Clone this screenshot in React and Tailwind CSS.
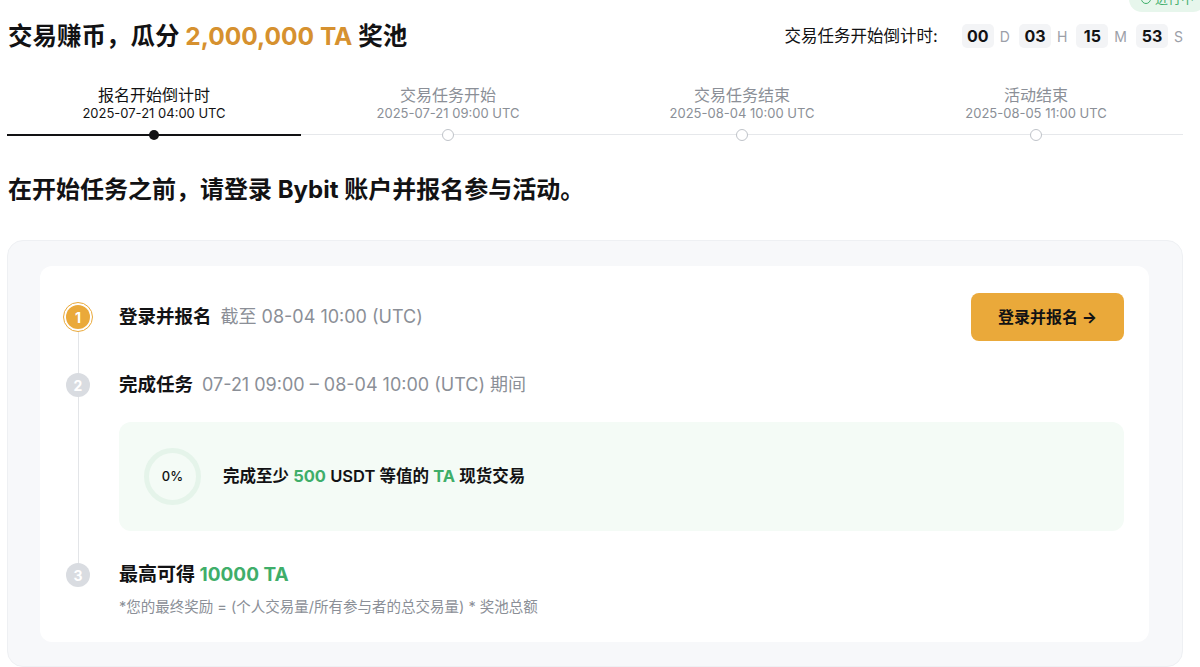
import React from "react";

const font = { fontFamily: "Inter, 'Noto Sans CJK SC', sans-serif" };

const milestones = [
  { title: "报名开始倒计时", date: "2025-07-21 04:00 UTC", active: true },
  { title: "交易任务开始", date: "2025-07-21 09:00 UTC" },
  { title: "交易任务结束", date: "2025-08-04 10:00 UTC" },
  { title: "活动结束", date: "2025-08-05 11:00 UTC" },
];

const countdown = [
  ["00", "D"],
  ["03", "H"],
  ["15", "M"],
  ["53", "S"],
];

function StepDot({ n, active }) {
  if (active) {
    return (
      <div className="w-[30px] h-[30px] rounded-full border border-[#eaa93a] bg-white flex items-center justify-center shrink-0">
        <div className="w-[24px] h-[24px] rounded-full bg-[#eaa93a] text-white text-[14px] font-bold flex items-center justify-center">
          {n}
        </div>
      </div>
    );
  }
  return (
    <div className="w-[30px] h-[30px] flex items-center justify-center shrink-0">
      <div className="w-[24px] h-[24px] rounded-full bg-[#d9dce1] text-white text-[14px] font-bold flex items-center justify-center">
        {n}
      </div>
    </div>
  );
}

export default function App() {
  return (
    <div className="relative bg-white w-[1200px] h-[667px] overflow-hidden text-[#121214]" style={font}>
      {/* status badge, mostly scrolled off the top */}
      <div className="absolute top-[-14px] right-[-6px] rounded-full bg-[#e7f6ec] text-[#3fae6a] text-[13px] px-3 py-[3px] flex items-center gap-1">
        <span className="w-[10px] h-[10px] rounded-full border border-[#3fae6a]" />
        进行中
      </div>

      <div className="pl-[7px] pr-[17px]">
        <div className="flex items-center justify-between h-[72px]">
          <h1 className="text-[24.5px] font-bold pl-[1px]">
            交易赚币，瓜分 <span className="text-[#d6912f]">2,000,000 TA</span> 奖池
          </h1>
          <div className="flex items-center">
            <span className="text-[16.5px] mr-[24px]">交易任务开始倒计时:</span>
            {countdown.map(([v, u], i) => (
              <div key={u} className="flex items-center">
                <div className="w-[32px] h-[24px] rounded-[5px] bg-[#f3f4f6] flex items-center justify-center text-[16px] font-bold">
                  {v}
                </div>
                <span className={`text-[14px] text-[#9ca0a8] ml-[6px] ${i < 3 ? "mr-[9px]" : ""}`}>{u}</span>
              </div>
            ))}
          </div>
        </div>

        {/* timeline */}
        <div className="grid grid-cols-4 mt-[13px]">
          {milestones.map((m) => (
            <div key={m.title} className="flex flex-col items-center">
              <div className={`text-[16px] leading-[20px] ${m.active ? "text-[#121214]" : "text-[#8b8f97]"}`}>{m.title}</div>
              <div className={`text-[13px] leading-[16px] ${m.active ? "text-[#121214]" : "text-[#8b8f97]"}`}>{m.date}</div>
              <div className="relative w-full h-[12px] mt-[8px] flex items-center justify-center">
                <div className={`absolute left-0 right-0 top-[5px] ${m.active ? "h-[1.5px] bg-[#121214]" : "h-px bg-[#e6e8eb]"}`} />
                {m.active ? (
                  <div className="relative w-[10px] h-[10px] rounded-full bg-[#121214]" />
                ) : (
                  <div className="relative w-[12px] h-[12px] rounded-full bg-white border border-[#bfc3c9]" />
                )}
              </div>
            </div>
          ))}
        </div>

        <h2 className="text-[24px] font-bold mt-[33px] pl-[1px] leading-[32px]">
          在开始任务之前，请登录 Bybit 账户并报名参与活动。
        </h2>

        {/* main card */}
        <div className="mt-[34px] rounded-[16px] bg-[#f7f8fa] border border-[#eef0f3] pl-[32px] pr-[33px] pt-[25px] pb-[24px]">
          <div className="relative bg-white rounded-[12px] pl-[23px] pr-[25px] pt-[27px] pb-[24px]">
            <div className="absolute left-[38px] top-[52px] h-[258px] w-px bg-[#e3e5e8]" />

            <div className="relative flex items-center h-[48px]">
              <StepDot n={1} active />
              <div className="ml-[26px] text-[18px] flex-1">
                <span className="font-bold text-[18.5px]">登录并报名</span>
                <span className="text-[#8b8f97] ml-[9px]">截至 08-04 10:00 (UTC)</span>
              </div>
              <button className="h-[48px] w-[153px] rounded-[8px] bg-[#eaa93a] text-[16px] font-bold text-[#121214]">
                登录并报名 →
              </button>
            </div>

            <div className="relative flex items-center h-[30px] mt-[29px]">
              <StepDot n={2} />
              <div className="ml-[26px] text-[18px]">
                <span className="font-bold text-[18.5px]">完成任务</span>
                <span className="text-[#8b8f97] ml-[9px]">07-21 09:00 – 08-04 10:00 (UTC) 期间</span>
              </div>
            </div>

            <div className="ml-[56px] mt-[22px] h-[109px] rounded-[12px] bg-[#f4fbf6] flex items-center pl-[25px]">
              <div className="w-[57px] h-[57px] rounded-full border-[5px] border-[#e5f4ea] flex items-center justify-center text-[13px] font-medium">
                0%
              </div>
              <div className="ml-[22px] text-[16.5px] font-semibold">
                完成至少 <span className="text-[#3fae6a] font-bold">500</span> USDT 等值的{" "}
                <span className="text-[#3fae6a] font-bold">TA</span> 现货交易
              </div>
            </div>

            <div className="relative flex items-center h-[30px] mt-[29px]">
              <StepDot n={3} />
              <div className="ml-[26px] text-[19px] font-bold">
                最高可得 <span className="text-[#3fae6a]">10000 TA</span>
              </div>
            </div>
            <div className="ml-[56px] mt-[6px] text-[14.5px] text-[#8b8f97]">
              *您的最终奖励 = (个人交易量/所有参与者的总交易量) * 奖池总额
            </div>
          </div>
        </div>
      </div>
    </div>
  );
}
